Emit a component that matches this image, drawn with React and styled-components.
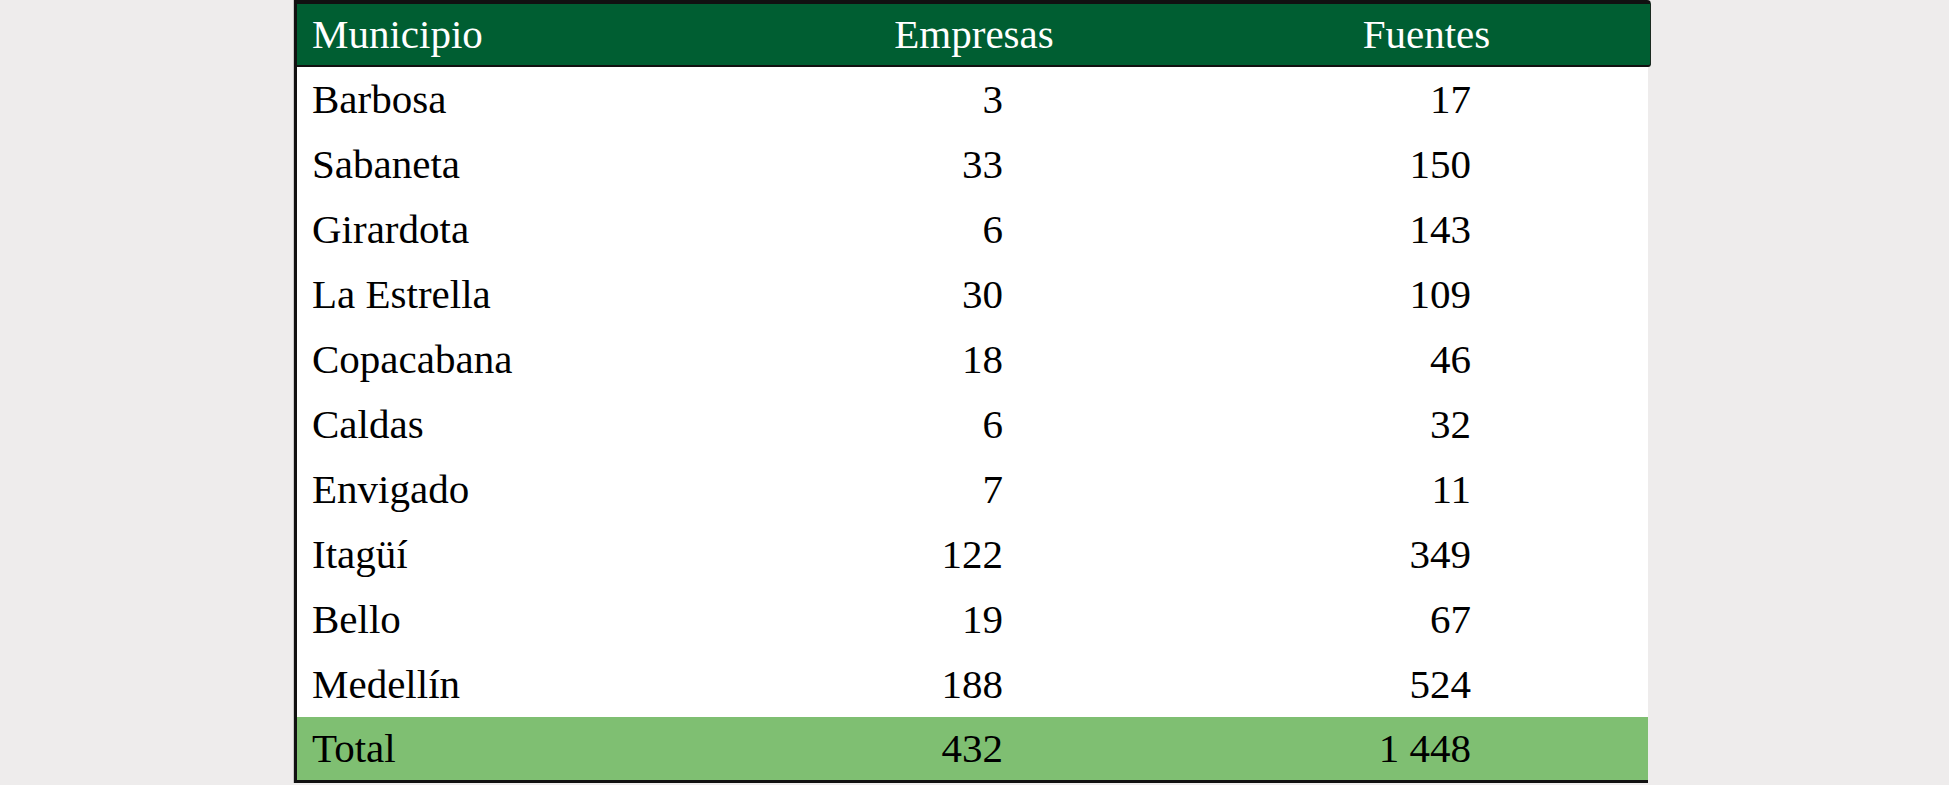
import React from "react";
import styled, { createGlobalStyle } from "styled-components";

const GlobalStyle = createGlobalStyle`
  html, body {
    margin: 0;
    padding: 0;
    background: #eeecec;
  }
`;

const serif = `"Liberation Serif", "Times New Roman", Times, serif`;

const Page = styled.div`
  width: 1949px;
  height: 785px;
  padding-left: 294px;
  box-sizing: border-box;
`;

const Table = styled.div`
  width: 1354px;
  border-left: 3px solid #111;
  border-bottom: 3px solid #111;
  box-sizing: border-box;
  background: #ffffff;
  box-shadow: -1px 0 0 #c8c6c6;
`;

const Row = styled.div`
  display: grid;
  grid-template-columns: 423px 508px 1fr;
  height: ${(p) => p.$height}px;
  background: ${(p) => p.$bg || "transparent"};
`;

const HeaderRow = styled(Row)`
  border-top: 4px solid #111;
  border-bottom: 2px solid #111;
  border-right: 1px solid #1a2a20;
  border-top-right-radius: 4px;
  border-bottom-right-radius: 3px;
  margin-right: -3px;
`;

const Cell = styled.div`
  font-family: ${serif};
  font-size: 41px;
  line-height: ${(p) => p.$lh}px;
  color: ${(p) => (p.$head ? "#ffffff" : "#000000")};
  white-space: nowrap;
`;

const NameCell = styled(Cell)`
  padding-left: 15px;
`;

const HeadCell = styled(Cell)`
  text-align: center;
  padding-right: ${(p) => p.$pr || 0}px;
`;

const NumCell = styled(Cell)`
  text-align: right;
  padding-right: ${(p) => p.$pr}px;
`;

const rows = [
  ["Barbosa", "3", "17"],
  ["Sabaneta", "33", "150"],
  ["Girardota", "6", "143"],
  ["La Estrella", "30", "109"],
  ["Copacabana", "18", "46"],
  ["Caldas", "6", "32"],
  ["Envigado", "7", "11"],
  ["Itagüí", "122", "349"],
  ["Bello", "19", "67"],
  ["Medellín", "188", "524"],
];

const App = () => {
  return (
    <Page>
      <GlobalStyle />
      <Table>
        <HeaderRow $height={61} $bg="#005e32">
          <NameCell $head $lh={61}>Municipio</NameCell>
          <HeadCell $head $lh={61}>Empresas</HeadCell>
          <HeadCell $head $lh={61} $pr={25}>Fuentes</HeadCell>
        </HeaderRow>
        {rows.map(([name, emp, fue]) => (
          <Row key={name} $height={65}>
            <NameCell $lh={65}>{name}</NameCell>
            <NumCell $lh={65} $pr={225}>{emp}</NumCell>
            <NumCell $lh={65} $pr={177}>{fue}</NumCell>
          </Row>
        ))}
        <Row $height={63} $bg="#7fbf72">
          <NameCell $lh={63}>Total</NameCell>
          <NumCell $lh={63} $pr={225}>432</NumCell>
          <NumCell $lh={63} $pr={177}>1 448</NumCell>
        </Row>
      </Table>
    </Page>
  );
};

export default App;
